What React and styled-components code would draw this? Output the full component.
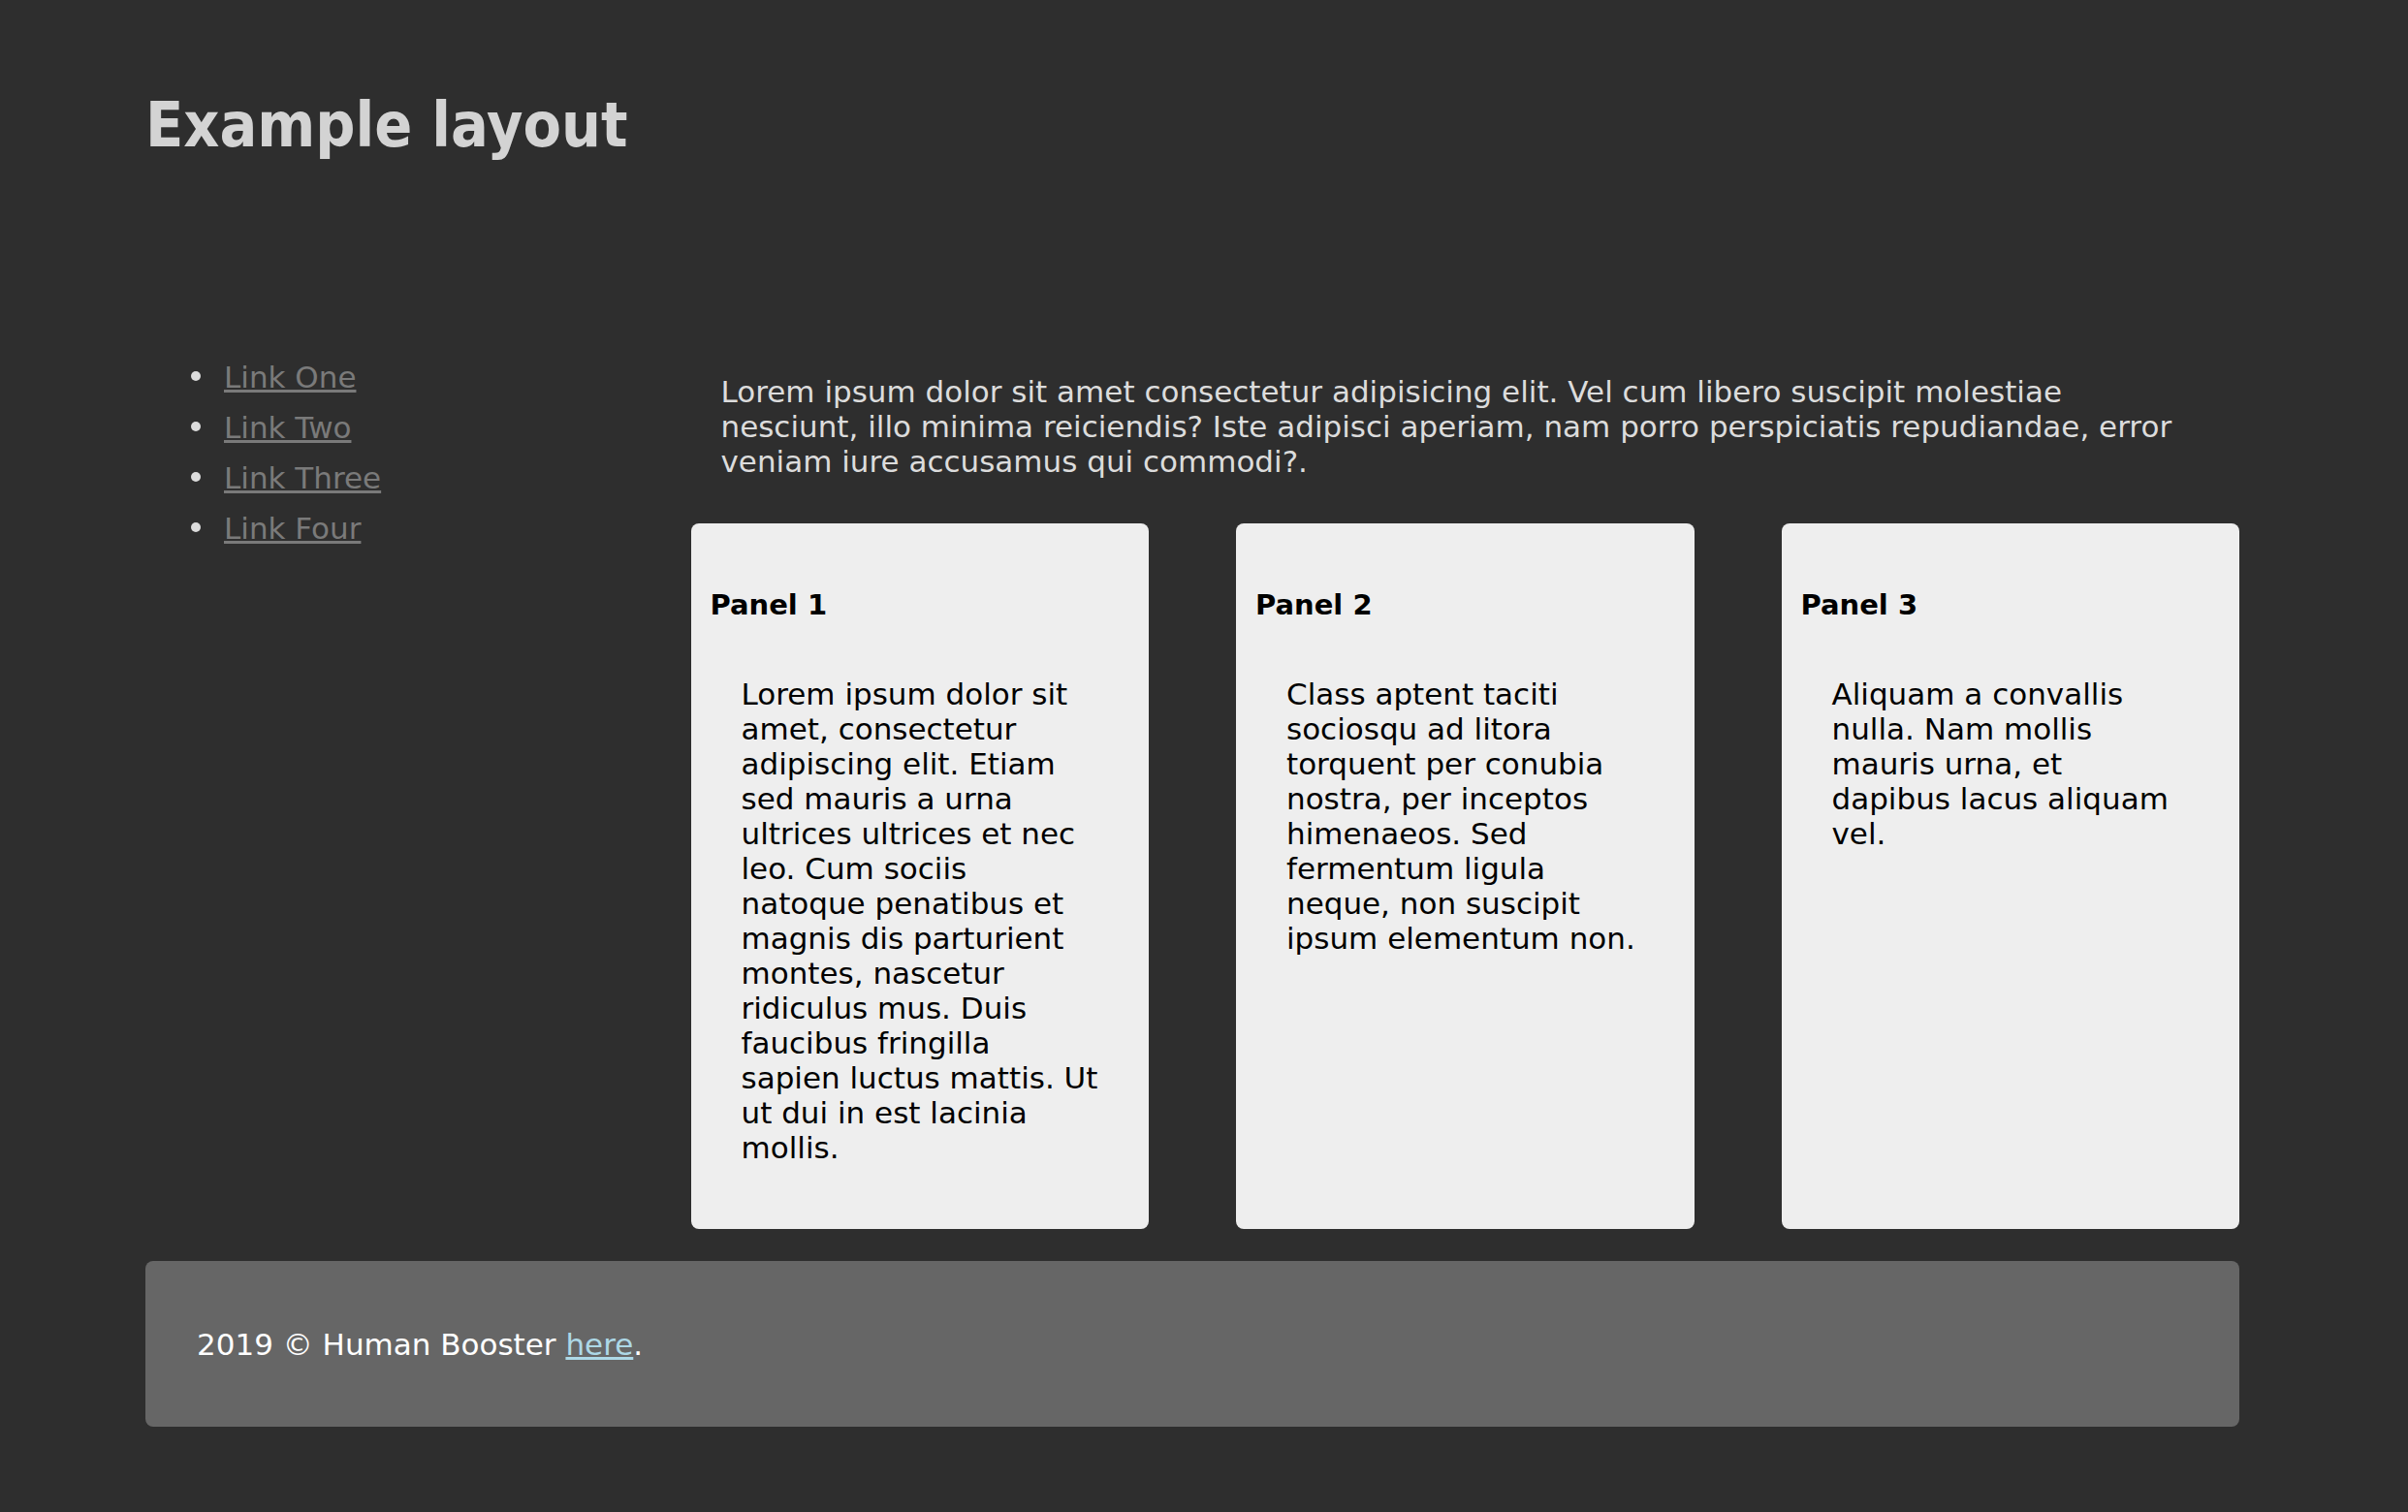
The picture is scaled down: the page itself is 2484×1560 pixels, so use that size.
import React from 'react'
import styled, { createGlobalStyle } from 'styled-components'

const GlobalStyle = createGlobalStyle`
  html, body {
    margin: 0;
    padding: 0;
    background: #2e2e2e;
  }
  body {
    font-family: "DejaVu Sans", "Liberation Sans", sans-serif;
    font-size: 31px;
    line-height: 36px;
    color: #dcdcdc;
  }
`

const Page = styled.div`
  min-height: 1560px;
  padding-top: 92px;
  box-sizing: border-box;
`

const Container = styled.div`
  width: 2160px;
  margin-left: 150px;
`

const Title = styled.h1`
  margin: 0;
  font-family: "DejaVu Sans Condensed", "DejaVu Sans", sans-serif;
  font-stretch: condensed;
  font-size: 64px;
  line-height: 74px;
  font-weight: bold;
  color: #d3d3d3;
`

const Layout = styled.div`
  display: grid;
  grid-template-columns: 1fr 3fr;
  column-gap: 30px;
  margin-top: 205px;
`

const Nav = styled.ul`
  margin: 0;
  padding: 0 0 0 47px;
  list-style: none;
`

const NavItem = styled.li`
  display: flex;
  align-items: center;
  gap: 24px;
  margin-bottom: 16px;

  &::before {
    content: '';
    width: 10px;
    height: 10px;
    border-radius: 50%;
    background: #dcdcdc;
    margin-top: -3px;
  }
`

const NavLink = styled.a`
  color: #7a7a7a;
  text-decoration: underline;
`

const Main = styled.main`
  display: flex;
  flex-direction: column;
`

const Intro = styled.p`
  margin: 15px 33px 46px 31px;
  color: #dcdcdc;
`

const Panels = styled.div`
  display: grid;
  grid-template-columns: repeat(3, 1fr);
  column-gap: 90px;
`

const Panel = styled.section`
  background: #eeeeee;
  border-radius: 8px;
  padding: 20px 20px;
  color: #000;
`

const PanelTitle = styled.h3`
  margin: 46px 0 0 0;
  font-size: 29px;
  line-height: 37px;
  font-weight: bold;
`

const PanelText = styled.p`
  margin: 55px 0 46px 32px;
`

// lines are kept as in the reference wrap
const Line = styled.span`
  display: block;
  white-space: nowrap;
`

const Footer = styled.footer`
  margin-top: 33px;
  background: #666666;
  border-radius: 8px;
  padding: 68px 53px 67px;
  color: #ffffff;
`

const FooterLink = styled.a`
  color: #add8e6;
  text-decoration: underline;
`

const links = ['Link One', 'Link Two', 'Link Three', 'Link Four']

const panels = [
  {
    title: 'Panel 1',
    lines: [
      'Lorem ipsum dolor sit',
      'amet, consectetur',
      'adipiscing elit. Etiam',
      'sed mauris a urna',
      'ultrices ultrices et nec',
      'leo. Cum sociis',
      'natoque penatibus et',
      'magnis dis parturient',
      'montes, nascetur',
      'ridiculus mus. Duis',
      'faucibus fringilla',
      'sapien luctus mattis. Ut',
      'ut dui in est lacinia',
      'mollis.'
    ]
  },
  {
    title: 'Panel 2',
    lines: [
      'Class aptent taciti',
      'sociosqu ad litora',
      'torquent per conubia',
      'nostra, per inceptos',
      'himenaeos. Sed',
      'fermentum ligula',
      'neque, non suscipit',
      'ipsum elementum non.'
    ]
  },
  {
    title: 'Panel 3',
    lines: [
      'Aliquam a convallis',
      'nulla. Nam mollis',
      'mauris urna, et',
      'dapibus lacus aliquam',
      'vel.'
    ]
  }
]

const App = () => {
  return (
    <Page>
      <GlobalStyle />
      <Container>
        <Title>Example layout</Title>

        <Layout>
          <nav>
            <Nav>
              {links.map((label) => (
                <NavItem key={label}>
                  <NavLink href="#">{label}</NavLink>
                </NavItem>
              ))}
            </Nav>
          </nav>

          <Main>
            <Intro>
              Lorem ipsum dolor sit amet consectetur adipisicing elit. Vel cum libero suscipit molestiae
              nesciunt, illo minima reiciendis? Iste adipisci aperiam, nam porro perspiciatis repudiandae,
              error veniam iure accusamus qui commodi?.
            </Intro>

            <Panels>
              {panels.map((panel) => (
                <Panel key={panel.title}>
                  <PanelTitle>{panel.title}</PanelTitle>
                  <PanelText>
                    {panel.lines.map((line, i) => (
                      <Line key={i}>{line}</Line>
                    ))}
                  </PanelText>
                </Panel>
              ))}
            </Panels>
          </Main>
        </Layout>

        <Footer>
          2019 © Human Booster <FooterLink href="#">here</FooterLink>.
        </Footer>
      </Container>
    </Page>
  )
}

export default App
